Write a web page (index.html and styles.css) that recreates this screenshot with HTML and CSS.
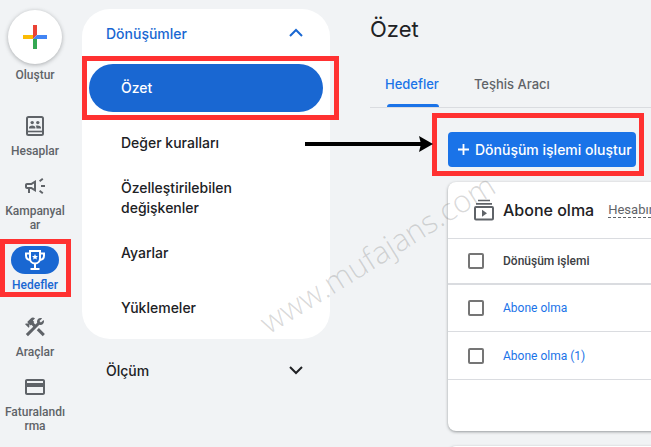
FILE: index.html
```html
<!DOCTYPE html>
<html lang="tr">
<head>
    <meta charset="UTF-8">
    <meta name="viewport" content="width=device-width, initial-scale=1">
    <title>Özet - Hedefler</title>
    <link rel="stylesheet" href="styles.css">
</head>

<body>
  <div class="app">

    <nav class="rail">
      <button type="button" class="rail-item rail-create">
        <span class="create-circle">
          <svg width="24" height="24" viewBox="0 0 24 24">
            <path d="M10 0h4v10l-4 4z" fill="#ea4335"/>
            <path d="M0 10h10v4H0z" fill="#fbbc04"/>
            <path d="M10 14l4 0v10h-4z" fill="#34a853"/>
            <path d="M14 10h10v4H10z" fill="#4285f4"/>
          </svg>
        </span>
        <span class="rail-label">Oluştur</span>
      </button>

      <a href="#" class="rail-item">
        <span class="rail-icon">
          <svg width="24" height="24" viewBox="0 0 24 24">
            <rect x="4" y="3" width="16" height="18" rx="1.5" fill="none" stroke="currentColor" stroke-width="2"/>
            <path d="M4 17.5h16" stroke="currentColor" stroke-width="1.6"/>
            <circle cx="9.2" cy="8.6" r="1.7"/>
            <circle cx="14.8" cy="8.6" r="1.7"/>
            <path d="M6 14.5v-1c0-1.300 1.900-2 3.200-2s3.200.7 3.200 2v1zM13.400 14.500v-1c0-.7-.3-1.300-.8-1.700.7-.2 1.500-.3 2.200-.3 1.300 0 3.200.7 3.200 2v1z"/>
          </svg>
        </span>
        <span class="rail-label">Hesaplar</span>
      </a>

      <a href="#" class="rail-item">
        <span class="rail-icon">
          <svg width="24" height="24" viewBox="0 0 24 24">
            <path d="M18 11v2h4v-2h-4zm-2 6.610c.96.710 2.210 1.650 3.200 2.390.4-.53.800-1.070 1.200-1.600-.99-.74-2.240-1.680-3.200-2.400-.4.540-.8 1.080-1.200 1.610zM20.400 5.600c-.4-.53-.8-1.070-1.200-1.600-.99.740-2.240 1.680-3.200 2.400.4.530.8 1.070 1.200 1.600.96-.72 2.210-1.650 3.200-2.400zM4 9c-1.100 0-2 .9-2 2v2c0 1.100.9 2 2 2h1v4h2v-4h1l5 3V6L8 9H4zm5.030 1.710L11 9.530v4.940l-1.970-1.180-.48-.29H4v-2h4.550l.48-.29z"/>
          </svg>
        </span>
        <span class="rail-label">Kampanyalar</span>
      </a>

      <a href="#" class="rail-item rail-active" aria-current="page">
        <span class="rail-icon">
          <svg class="line-icon" width="24" height="24" viewBox="0 0 24 24">
            <path d="M7 3h10v7.500c0 3-2.200 5-5 5s-5-2-5-5z"/>
            <path d="M7 5.500H3v2c0 2.400 1.800 4.300 4.500 4.600M17 5.500h4v2c0 2.400-1.800 4.300-4.500 4.600M12 15.500V20M7.500 21h9"/>
            <path class="star" d="M12 6l.9 1.900 2.100.2-1.600 1.400.5 2.100-1.900-1.100-1.900 1.100.5-2.100L9 8.100l2.100-.2z"/>
          </svg>
        </span>
        <span class="rail-label">Hedefler</span>
        <span class="callout callout-rail"></span>
      </a>

      <a href="#" class="rail-item rail-tools">
        <span class="rail-icon">
          <svg width="24" height="24" viewBox="0 0 24 24">
            <path d="M13.780 15.170l2.120-2.120 6 6-2.120 2.120z"/>
            <path d="M17.500 10c1.930 0 3.500-1.570 3.500-3.500 0-.58-.16-1.120-.41-1.600l-2.700 2.700-1.490-1.490 2.700-2.700C18.620 3.160 18.080 3 17.500 3 15.570 3 14 4.570 14 6.500c0 .41.080.8.210 1.160l-1.850 1.850-1.780-1.780.71-.71-1.410-1.410L12 3.490c-1.170-1.170-3.070-1.170-4.240 0L4.220 7.030l1.410 1.410H2.810l-.71.71 3.540 3.540.71-.71V9.150l1.410 1.410.71-.71 1.780 1.780-7.410 7.410 2.120 2.120L16.340 9.790c.36.130.75.210 1.160.21z"/>
          </svg>
        </span>
        <span class="rail-label">Araçlar</span>
      </a>

      <a href="#" class="rail-item">
        <span class="rail-icon">
          <svg width="24" height="24" viewBox="0 0 24 24">
            <path d="M20 4H4c-1.110 0-1.990.89-1.990 2L2 18c0 1.110.89 2 2 2h16c1.110 0 2-.89 2-2V6c0-1.110-.89-2-2-2zm0 14H4v-6h16v6zm0-10H4V6h16v2z"/>
          </svg>
        </span>
        <span class="rail-label">Faturalandırma</span>
      </a>
    </nav>

    <aside class="side">
      <div class="side-panel">
        <button type="button" class="side-header side-header-open" aria-expanded="true">
          Dönüşümler
          <svg class="line-icon" width="14" height="10" viewBox="0 0 14 10"><path d="M1 8l6-6 6 6"/></svg>
        </button>
        <a href="#" class="side-link side-link-active" aria-current="page">
          Özet
          <span class="callout callout-side"></span>
        </a>
        <a href="#" class="side-link">Değer kuralları</a>
        <a href="#" class="side-link">Özelleştirilebilen değişkenler</a>
        <a href="#" class="side-link">Ayarlar</a>
        <a href="#" class="side-link">Yüklemeler</a>
      </div>
      <button type="button" class="side-header" aria-expanded="false">
        Ölçüm
        <svg class="line-icon" width="14" height="10" viewBox="0 0 14 10"><path d="M1 2l6 6 6-6"/></svg>
      </button>
    </aside>

    <main class="content">
      <h1 class="page-title">Özet</h1>

      <div class="tabs">
        <a href="#" class="tab tab-active">Hedefler</a>
        <a href="#" class="tab">Teşhis Aracı</a>
      </div>

      <div class="goals">
        <button type="button" class="create-button">
          <svg class="line-icon" width="11" height="11" viewBox="0 0 12 12"><path d="M6 0v12M0 6h12"/></svg>
          Dönüşüm işlemi oluştur
          <span class="callout callout-button"></span>
        </button>

        <section class="card">
          <header class="card-header">
            <svg width="20" height="22" viewBox="0 0 20 22">
              <path d="M4 1.500h12M2 4.800h16" stroke="currentColor" stroke-width="1.700"/>
              <rect x="1" y="8" width="18" height="12.500" rx="1" fill="none" stroke="currentColor" stroke-width="2"/>
              <path d="M8 10.800v7l5-3.500z"/>
            </svg>
            <h2 class="card-title">Abone olma</h2>
            <span class="card-note">Hesabın</span>
          </header>
          <table class="actions">
            <thead>
              <tr>
                <th class="check-cell"><input type="checkbox" class="check" aria-label="Tümünü seç"></th>
                <th>Dönüşüm işlemi</th>
              </tr>
            </thead>
            <tbody>
              <tr>
                <td class="check-cell"><input type="checkbox" class="check" aria-label="Abone olma"></td>
                <td><a href="#">Abone olma</a></td>
              </tr>
              <tr>
                <td class="check-cell"><input type="checkbox" class="check" aria-label="Abone olma (1)"></td>
                <td><a href="#">Abone olma (1)</a></td>
              </tr>
            </tbody>
          </table>
          <div class="card-footer"></div>
        </section>

        <section class="card card-next"></section>
      </div>
    </main>

    <!-- Arrow from the side menu to the create button -->
    <svg class="arrow" width="130" height="16" viewBox="0 0 130 16">
      <path d="M0 8h118" stroke="#000" stroke-width="4"/>
      <path d="M114 0l14 8-14 8 2-8z" fill="#000"/>
    </svg>
    <div class="watermark">www.mufajans.com</div>
  </div>
</body>
</html>
```
FILE: styles.css
```css
* {
    box-sizing: border-box;
}

body {
    margin: 0;
    overflow: hidden;
    background: #f1f3f5;
    color: #202124;
    font-family: Inter, "Liberation Sans", sans-serif;
    font-size: 14px;
}

a {
    color: inherit;
    text-decoration: none;
}

button {
    border: 0;
    padding: 0;
    background: none;
    color: inherit;
    font: inherit;
    cursor: pointer;
}

svg {
    flex: none;
    fill: currentColor;
}

.line-icon {
    fill: none;
    stroke: currentColor;
    stroke-width: 2;
}

.star {
    fill: currentColor;
    stroke: none;
}

.app {
    position: relative;
    display: flex;
    height: 100vh;
    overflow: hidden;
}

/* Left icon rail */
.rail {
    display: flex;
    flex-direction: column;
    flex: none;
    gap: 14px;
    width: 70px;
    padding-top: 10px;
    color: #5f6368;
    font-family: Roboto, sans-serif;
    font-size: 12px;
    font-weight: 500;
    line-height: 14px;
}

.rail-item {
    position: relative;
    display: flex;
    flex-direction: column;
    align-items: center;
    gap: 4px;
    padding: 0 3px;
    text-align: center;
}

.rail-create {
    margin-bottom: 16px;
}

.rail-tools {
    margin-top: 7px;
}

.create-circle {
    display: flex;
    align-items: center;
    justify-content: center;
    width: 54px;
    height: 54px;
    border-radius: 50%;
    background: #fff;
    box-shadow: 0 1px 4px rgba(60, 64, 67, 0.4);
}

.rail-icon {
    display: flex;
    align-items: center;
    justify-content: center;
    width: 48px;
    height: 28px;
    border-radius: 14px;
}

.rail-label {
    max-width: 100%;
    word-break: break-all;
}

.rail-active {
    color: #1967d2;
}

.rail-active .rail-icon {
    background: #1967d2;
    color: #fff;
}

/* Side menu */
.side {
    flex: none;
    width: 248px;
    margin-left: 12px;
    padding-top: 9px;
    font-weight: 500;
}

.side-panel {
    display: flex;
    flex-direction: column;
    gap: 7px;
    margin-bottom: 7px;
    padding: 0 7px 7px;
    border-radius: 28px;
    background: #fff;
}

.side-header {
    display: flex;
    align-items: center;
    justify-content: space-between;
    width: 100%;
    height: 48px;
    padding: 0 27px 0 24px;
}

.side-header-open {
    padding: 0 20px 0 17px;
    color: #1967d2;
}

.side-link {
    position: relative;
    display: flex;
    align-items: center;
    min-height: 48px;
    padding: 4px 72px 4px 32px;
    border-radius: 24px;
    line-height: 20px;
}

.side-link-active {
    background: #1967d2;
    color: #fff;
}

/* Main column */
.content {
    flex: 1;
    min-width: 0;
    margin-left: 40px;
    padding-top: 14px;
}

.page-title {
    margin: 0;
    font-size: 22px;
    font-weight: 400;
    line-height: 30px;
}

.tabs {
    display: flex;
    gap: 35px;
    margin-top: 18px;
    padding-left: 15px;
    border-bottom: 1px solid #dadce0;
    color: #5f6368;
    font-size: 13px;
    font-weight: 500;
}

.tab {
    position: relative;
    line-height: 45px;
}

.tab-active {
    color: #1a73e8;
}

.tab-active::after {
    content: "";
    position: absolute;
    right: 0;
    bottom: 0;
    left: 2px;
    height: 3px;
    border-radius: 3px 3px 0 0;
    background: #1a73e8;
}

.goals {
    padding: 24px 0 0 78px;
}

.create-button {
    position: relative;
    display: flex;
    align-items: center;
    gap: 6px;
    height: 35px;
    padding: 0 4px 0 10px;
    border-radius: 4px;
    background: #1a73e8;
    color: #fff;
    font-weight: 500;
    white-space: nowrap;
}

.card {
    min-width: 240px;
    margin-top: 15px;
    border-radius: 8px;
    background: #fff;
    box-shadow: 0 1px 3px rgba(60, 64, 67, 0.5);
}

.card-next {
    height: 40px;
}

.card-header {
    display: flex;
    align-items: center;
    height: 56px;
    padding-left: 26px;
    color: #5f6368;
}

.card-title {
    margin: 0 14px 0 9px;
    color: #202124;
    font-size: 16px;
    font-weight: 500;
}

.card-note {
    border-bottom: 1px dashed #5f6368;
    font-family: Roboto, sans-serif;
    font-size: 13px;
    line-height: 15px;
}

.actions {
    width: 100%;
    border-collapse: collapse;
    font-family: Roboto, sans-serif;
    font-size: 12px;
}

.actions th,
.actions td {
    height: 48px;
    padding: 0;
    border-bottom: 1px solid #dadce0;
    text-align: left;
}

.actions th {
    height: 45px;
    border-top: 1px solid #dadce0;
    border-bottom-width: 2px;
    color: #3c4043;
    font-weight: 500;
}

.actions a {
    color: #1a73e8;
}

.actions .check-cell {
    width: 55px;
    padding-left: 20px;
}

.check {
    display: block;
    width: 16px;
    height: 16px;
    margin: 0;
    border: 2px solid #757575;
    border-radius: 2px;
    appearance: none;
}

.check:checked {
    border-color: #1a73e8;
    background: #1a73e8;
}

.card-footer {
    height: 51px;
}

/* Red highlight frames */
.callout {
    position: absolute;
    border: 5px solid #ff3131;
    pointer-events: none;
}

.callout-rail {
    inset: -7px -1px -5px 0;
}

.callout-side {
    inset: -8px -16px -8px -7px;
}

.callout-button {
    inset: -19px -8px -9px -16px;
}

.arrow {
    position: absolute;
    top: 136px;
    left: 305px;
}

.watermark {
    position: absolute;
    top: 235px;
    left: 242px;
    color: rgba(120, 120, 120, 0.28);
    font-family: "Open Sans", sans-serif;
    font-size: 31px;
    font-weight: 300;
    line-height: 36px;
    white-space: nowrap;
    transform: rotate(-32deg);
    pointer-events: none;
}
```
